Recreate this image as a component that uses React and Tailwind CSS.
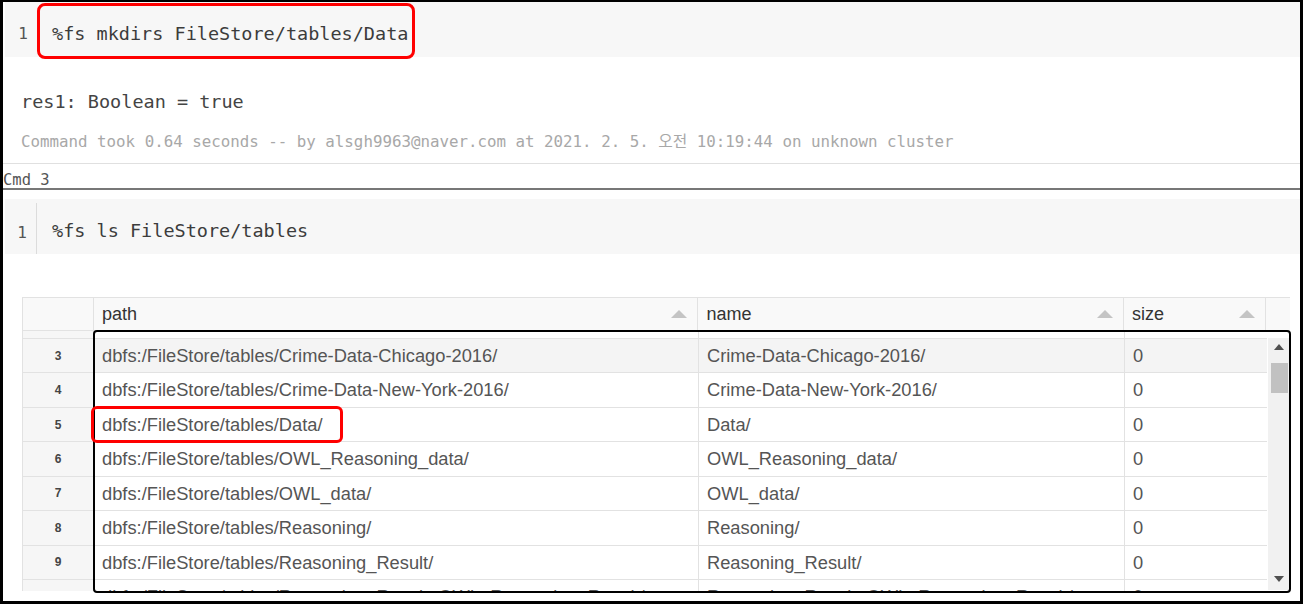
import React from "react";

const rows = [
  { i: 3, path: "dbfs:/FileStore/tables/Crime-Data-Chicago-2016/", name: "Crime-Data-Chicago-2016/", hover: true },
  { i: 4, path: "dbfs:/FileStore/tables/Crime-Data-New-York-2016/", name: "Crime-Data-New-York-2016/" },
  { i: 5, path: "dbfs:/FileStore/tables/Data/", name: "Data/" },
  { i: 6, path: "dbfs:/FileStore/tables/OWL_Reasoning_data/", name: "OWL_Reasoning_data/" },
  { i: 7, path: "dbfs:/FileStore/tables/OWL_data/", name: "OWL_data/" },
  { i: 8, path: "dbfs:/FileStore/tables/Reasoning/", name: "Reasoning/" },
  { i: 9, path: "dbfs:/FileStore/tables/Reasoning_Result/", name: "Reasoning_Result/" },
  { i: 10, path: "dbfs:/FileStore/tables/Reasoning_Result_OWL_Reasoning_Result/", name: "Reasoning_Result_OWL_Reasoning_Result/" },
];

const mono = "font-['DejaVu_Sans_Mono','Liberation_Mono','Noto_Sans_CJK_KR',monospace]";
const sans = "font-['Liberation_Sans',Arial,sans-serif]";

const SortArrow = () => (
  <svg width="16" height="8" viewBox="0 0 16 8" className="shrink-0">
    <path d="M0 8 L8 0 L16 8 Z" fill="#c4c4c4" />
  </svg>
);

const HeaderCell = ({ label, width }) => (
  <div className={`${width} h-full flex items-center justify-between pl-[8px] pr-[10px] border-r border-[#e2e2e2]`}>
    <span className="text-[18px] text-[#333]">{label}</span>
    <SortArrow />
  </div>
);

const CodeCell = ({ code, gutterLine }) => (
  <div className="h-[55px] ml-[2px] bg-[#f7f7f7] flex items-center">
    <div className={`w-[32px] flex items-center justify-end pr-[9px] pt-[9px] ${gutterLine ? "border-r border-[#dcdcdc] h-[51px] mt-[4px]" : "h-full"}`}>
      <span className={`${mono} text-[16px] text-[#555]`}>1</span>
    </div>
    <span className={`${mono} text-[18.5px] text-[#3c3c3c] pl-[15px] pt-[9px]`}>{code}</span>
  </div>
);

export default function App() {
  return (
    <div className="w-[1303px] h-[604px] bg-white border-t-[2px] border-x-[3px] border-b-[3px] border-black overflow-hidden relative">
      <CodeCell code="%fs mkdirs FileStore/tables/Data" />

      <div className="h-[107px] flex flex-col pl-[18px] border-b border-[#e0e0e0]">
        <div className={`${mono} text-[18.5px] text-[#444] mt-[33px] leading-[24px]`}>res1: Boolean = true</div>
        <div className={`${mono} text-[15.8px] text-[#a8a8a8] mt-[18px] leading-[20px]`}>
          Command took 0.64 seconds -- by alsgh9963@naver.com at 2021. 2. 5. 오전 10:19:44 on unknown cluster
        </div>
      </div>

      <div className="h-[26px] flex items-end border-b-[2px] border-[#777]">
        <span className={`${mono} text-[15.5px] text-[#555] leading-none`}>Cmd 3</span>
      </div>

      <div className="h-[9px]" />
      <CodeCell code="%fs ls FileStore/tables" gutterLine />

      <div className="h-[43px]" />

      {/* table */}
      <div className={`${sans} ml-[19px] w-[1268px] border-l border-t border-[#e2e2e2]`}>
        <div className="h-[33px] flex bg-[#f9f9f9] border-b border-[#e2e2e2]">
          <div className="w-[71px] h-full border-r border-[#e2e2e2]" />
          <HeaderCell label="path" width="w-[605px]" />
          <HeaderCell label="name" width="w-[426px]" />
          <HeaderCell label="size" width="w-[142px]" />
          <div className="w-[24px] h-full" />
        </div>

        <div className="h-[260px] flex">
          <div className="w-[1244px] h-full overflow-hidden">
            {/* bottom slice of the row scrolled out of view */}
            <div className="h-[8px] flex border-b border-[#e2e2e2]">
              <div className="w-[71px] shrink-0 bg-[#f6f6f6] border-r border-[#e2e2e2]" />
              <div className="w-[605px] shrink-0 border-r border-[#e2e2e2]" />
              <div className="w-[426px] shrink-0 border-r border-[#e2e2e2]" />
            </div>
            {rows.map((r) => (
              <div
                key={r.i}
                className={`h-[34.45px] flex border-b border-[#e2e2e2] ${r.hover ? "bg-[#f4f4f4]" : "bg-white"}`}
              >
                <div className="w-[71px] shrink-0 bg-[#f6f6f6] border-r border-[#e2e2e2] flex items-center justify-center">
                  <span className="text-[12px] font-bold text-[#444]">{r.i}</span>
                </div>
                <div className="w-[605px] shrink-0 border-r border-[#e2e2e2] flex items-center pl-[8px] overflow-hidden whitespace-nowrap">
                  <span className="text-[18.3px] text-[#555]">{r.path}</span>
                </div>
                <div className="w-[426px] shrink-0 border-r border-[#e2e2e2] flex items-center pl-[8px] overflow-hidden whitespace-nowrap">
                  <span className="text-[18.3px] text-[#555]">{r.name}</span>
                </div>
                <div className="w-[142px] shrink-0 flex items-center pl-[8px]">
                  <span className="text-[18.3px] text-[#555]">0</span>
                </div>
              </div>
            ))}
          </div>

          {/* scrollbar */}
          <div className="w-[22px] h-full pt-[7px] pb-[1px] ml-[1px]">
            <div className="h-full bg-[#f1f1f1] flex flex-col items-center">
              <svg width="10" height="6" viewBox="0 0 10 6" className="mt-[6px]">
                <path d="M0 6 L5 0 L10 6 Z" fill="#505050" />
              </svg>
              <div className="w-[17px] h-[30px] bg-[#c1c1c1] mt-[13px]" />
              <div className="flex-1" />
              <svg width="10" height="6" viewBox="0 0 10 6" className="mb-[8px]">
                <path d="M0 0 L5 6 L10 0 Z" fill="#505050" />
              </svg>
            </div>
          </div>
        </div>
      </div>

      {/* annotations */}
      <div className="absolute left-[34px] top-[1px] w-[378px] h-[56px] border-[3px] border-[#ff0000] rounded-[8px]" />
      <div className="absolute left-[90px] top-[328px] w-[1198px] h-[263px] border-[2px] border-black rounded-[4px]" />
      <div className="absolute left-[88px] top-[404px] w-[252px] h-[37px] border-[3px] border-[#ff0000] rounded-[6px]" />
    </div>
  );
}
